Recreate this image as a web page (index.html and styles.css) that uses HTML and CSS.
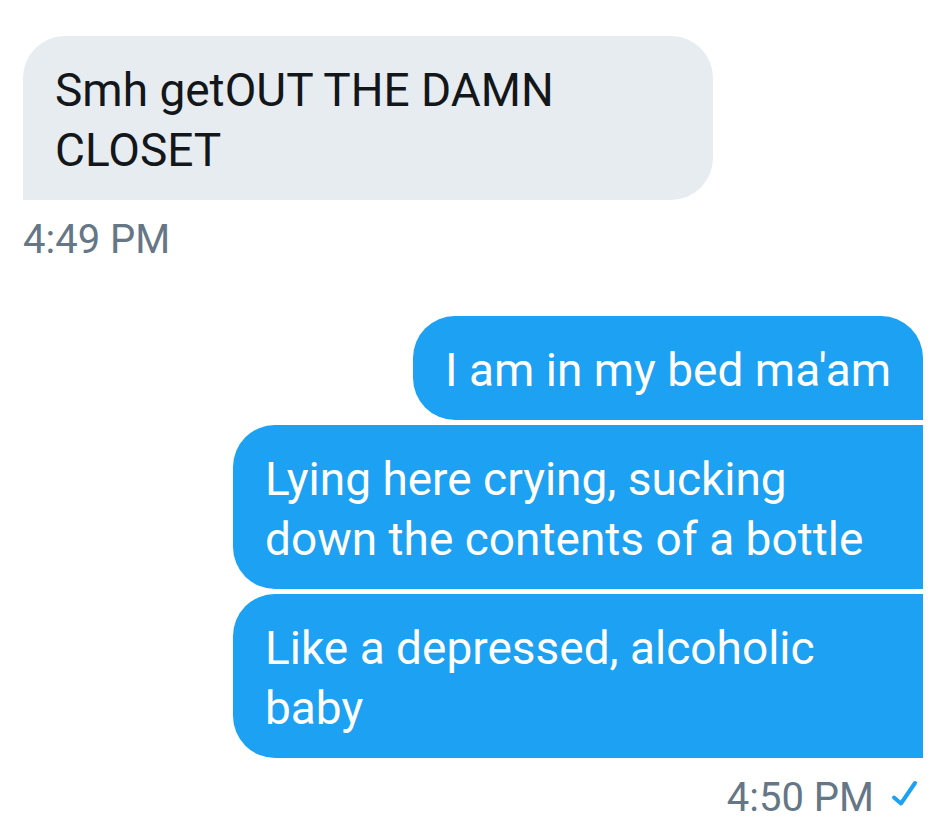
FILE: index.html
```html
<!DOCTYPE html>
<html lang="en">
<head>
    <meta charset="UTF-8">
    <meta name="viewport" content="width=device-width, initial-scale=1.0">
    <title>Messages</title>
    <link rel="stylesheet" href="styles.css">
</head>
<body>
    <main class="conversation">
        <section class="group received">
            <p class="bubble">Smh getOUT THE DAMN CLOSET</p>
            <div class="meta">
                <time datetime="16:49">4:49 PM</time>
            </div>
        </section>

        <section class="group sent">
            <p class="bubble">I am in my bed ma'am</p>
            <p class="bubble">Lying here crying, sucking down the contents of a bottle</p>
            <p class="bubble">Like a depressed, alcoholic baby</p>
            <div class="meta">
                <time datetime="16:50">4:50 PM</time>
                <svg class="check" viewBox="0 0 28 36" role="img" aria-label="Sent">
                    <path d="M4 17.5 L11 23.5 L25 3" />
                </svg>
            </div>
        </section>
    </main>
</body>
</html>
```

FILE: styles.css
```css
* {
    box-sizing: border-box;
}
body {
    margin: 0;
    background-color: #fff;
    font-family: Roboto, Arial, sans-serif;
    color: #14171a;
}
.conversation {
    display: flex;
    flex-direction: column;
    gap: 52px;
    padding: 36px 17px 0 23px;
}
.group {
    display: flex;
    flex-direction: column;
    gap: 5px;
}
.received {
    align-items: flex-start;
}
.sent {
    align-items: flex-end;
}
.bubble {
    max-width: 690px;
    margin: 0;
    padding: 24px 32px 20px;
    border-radius: 42px;
    font-size: 46px;
    line-height: 60px;
}
.received .bubble {
    background-color: #e6ecf0;
    border-bottom-left-radius: 0;
}
.sent .bubble {
    background-color: #1da1f2;
    border-bottom-right-radius: 0;
    color: #fff;
}
.sent .bubble + .bubble {
    border-top-right-radius: 0;
}
.meta {
    display: flex;
    align-items: center;
    gap: 16px;
    padding: 11px 5px 0 0;
    font-size: 40px;
    line-height: 48px;
    color: #657786;
}
.check {
    width: 28px;
    height: 36px;
    fill: none;
    stroke: #1da1f2;
    stroke-width: 4;
    stroke-linecap: round;
    stroke-linejoin: round;
}
```
